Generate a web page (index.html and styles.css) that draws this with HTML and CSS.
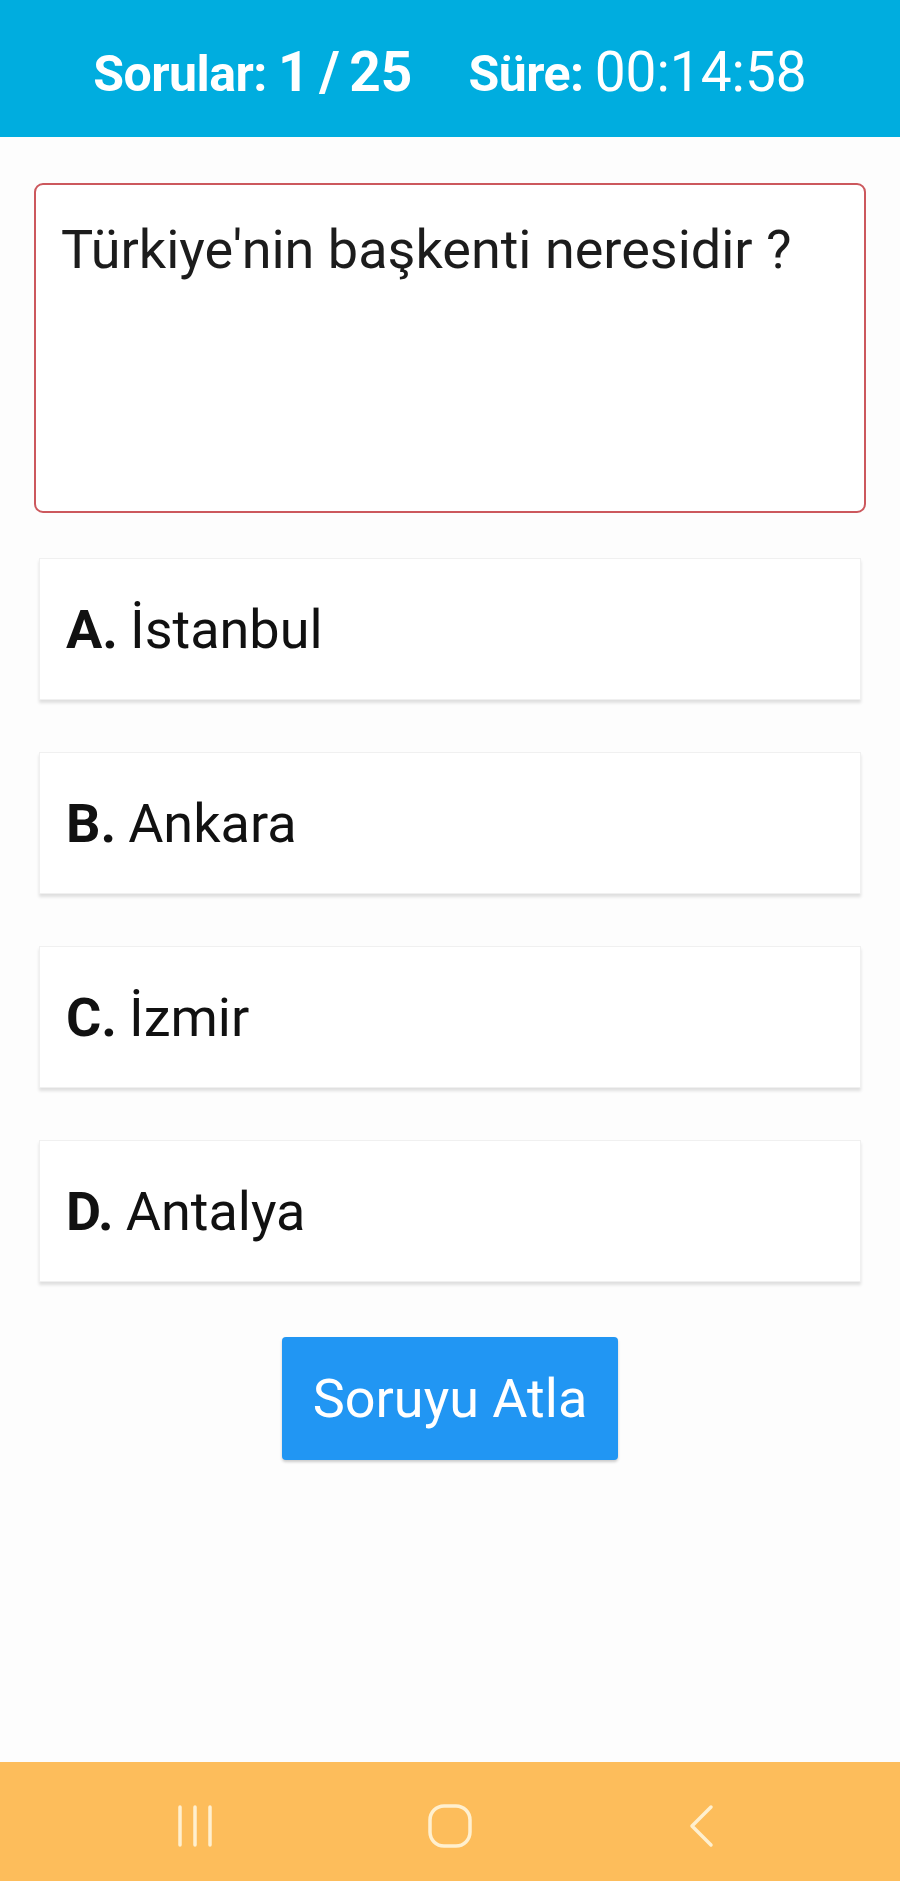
FILE: index.html
```html
<!DOCTYPE html>
<html lang="tr">
<head>
    <meta charset="UTF-8">
    <meta name="viewport" content="width=device-width, initial-scale=1.0">
    <title>Bilgi Yarışması</title>
    <link rel="stylesheet" href="styles.css">
</head>
<body>
    <div class="screen">
        <header class="top-bar">
            <div class="stat">
                <span class="stat-label">Sorular:</span>
                <span class="stat-value bold">1 / 25</span>
            </div>
            <div class="stat">
                <span class="stat-label">Süre:</span>
                <span class="stat-value">00:14:58</span>
            </div>
        </header>

        <main class="quiz">
            <div class="question-box">
                <p>Türkiye'nin başkenti neresidir ?</p>
            </div>

            <div class="options">
                <div class="option"><strong>A.</strong> İstanbul</div>
                <div class="option"><strong>B.</strong> Ankara</div>
                <div class="option"><strong>C.</strong> İzmir</div>
                <div class="option"><strong>D.</strong> Antalya</div>
            </div>

            <button class="skip-btn">Soruyu Atla</button>
        </main>

        <nav class="nav-bar">
            <svg class="nav-icon" width="44" height="44" viewBox="0 0 44 44">
                <line x1="5" y1="3" x2="5" y2="41" />
                <line x1="20" y1="3" x2="20" y2="41" />
                <line x1="35" y1="3" x2="35" y2="41" />
            </svg>
            <svg class="nav-icon" width="44" height="44" viewBox="0 0 44 44">
                <rect x="2" y="2" width="40" height="40" rx="14" />
            </svg>
            <svg class="nav-icon" width="44" height="44" viewBox="0 0 44 44">
                <polyline points="31,3 12,22 31,41" />
            </svg>
        </nav>
    </div>
</body>
</html>
```

FILE: styles.css
```css
body {
    margin: 0;
    font-family: Roboto, 'Noto Sans', sans-serif;
    background-color: #fdfdfd;
}
.screen {
    width: 900px;
    height: 1881px;
    display: flex;
    flex-direction: column;
}
.top-bar {
    height: 137px;
    background-color: #00addf;
    color: #fff;
    display: flex;
    justify-content: center;
    align-items: center;
    gap: 56px;
    padding-top: 6px;
    box-sizing: border-box;
}
.stat {
    display: flex;
    align-items: baseline;
    gap: 11px;
}
.stat-label {
    font-size: 50px;
    font-weight: 700;
    letter-spacing: -0.5px;
}
.stat-value {
    font-size: 55px;
    font-weight: 400;
}
.stat-value.bold {
    font-weight: 700;
    word-spacing: -4px;
}
.quiz {
    flex: 1;
    padding: 46px 34px 0;
    display: flex;
    flex-direction: column;
}
.question-box {
    height: 330px;
    box-sizing: border-box;
    border: 2px solid #cc585d;
    border-radius: 9px;
    background-color: #fff;
    padding: 33px 25px;
}
.question-box p {
    margin: 0;
    font-size: 54px;
    color: #1c1c1c;
}
.options {
    display: flex;
    flex-direction: column;
    gap: 52px;
    margin: 45px 5px 0;
}
.option {
    height: 140px;
    display: flex;
    align-items: center;
    gap: 12px;
    padding: 0 26px;
    background-color: #fff;
    border: 1px solid #f0f0f0;
    box-shadow: 0 3px 3px rgba(0, 0, 0, 0.12);
    font-size: 54px;
    color: #111;
}
.option strong {
    font-weight: 700;
}
.skip-btn {
    align-self: center;
    margin-top: 55px;
    width: 336px;
    height: 123px;
    border: none;
    border-radius: 4px;
    background-color: #2196f3;
    color: #fff;
    font-family: Roboto, sans-serif;
    font-size: 54px;
    box-shadow: 0 2px 3px rgba(0, 0, 0, 0.2);
}
.nav-bar {
    height: 119px;
    box-sizing: border-box;
    background-color: #fdbd5b;
    display: flex;
    align-items: center;
    justify-content: space-between;
    padding: 8px 176px 0 175px;
}
.nav-icon {
    fill: none;
    stroke: #fff0cf;
    stroke-width: 3.5;
    stroke-linecap: round;
    stroke-linejoin: round;
}
```
